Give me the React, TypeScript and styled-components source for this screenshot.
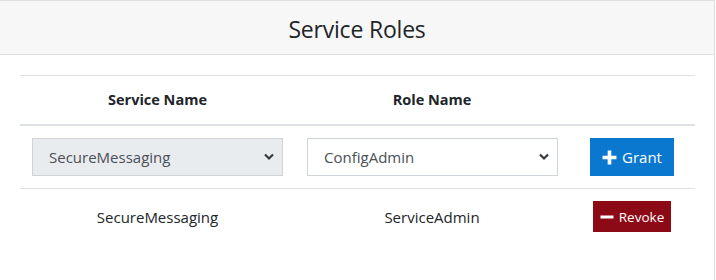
import styled, { createGlobalStyle } from 'styled-components';

const GlobalStyle = createGlobalStyle`
    html, body {
        margin: 0;
        padding: 0;
        background: #ffffff;
    }
    body {
        font-family: "Open Sans", "Noto Sans", sans-serif;
        font-size: 15px;
        color: #212529;
        overflow: hidden;
    }
`

const Card = styled.div`
    width: 715px;
    height: 280px;
    box-sizing: border-box;
    border-top: 1px solid #dfdfdf;
    border-right: 1px solid #dfdfdf;
    background: #ffffff;
`

const CardHeader = styled.div`
    height: 53px;
    display: flex;
    align-items: center;
    justify-content: center;
    background: #f7f7f7;
    border-bottom: 1px solid #dfdfdf;
`

const Title = styled.h3`
    margin: 0;
    font-size: 23px;
    font-weight: 400;
    color: #212529;
    letter-spacing: -0.2px;
    padding-top: 2px;
`

const CardBody = styled.div`
    padding: 20px 20px 0 20px;
`

const Table = styled.table`
    width: 675px;
    border-collapse: collapse;
    table-layout: fixed;
`

const HeadCell = styled.th`
    padding: 12px;
    line-height: 24px;
    font-weight: 700;
    font-size: 14.5px;
    text-align: center;
    border-top: 1px solid #dee2e6;
    border-bottom: 2px solid #dee2e6;
`

const Cell = styled.td<{ $border?: boolean }>`
    padding: 12px;
    line-height: 24px;
    text-align: center;
    vertical-align: middle;
    border-top: ${p => (p.$border ? '1px solid #dee2e6' : 'none')};
`

const SelectWrap = styled.div`
    position: relative;
    width: 251px;
    height: 38px;
`

const Select = styled.select<{ $disabled?: boolean }>`
    appearance: none;
    -webkit-appearance: none;
    width: 100%;
    height: 38px;
    box-sizing: border-box;
    padding: 0 30px 0 16px;
    border: 1px solid #ced4da;
    border-radius: 0;
    background: ${p => (p.$disabled ? '#e9ecef' : '#ffffff')};
    color: #495057;
    font-family: "Open Sans", "Noto Sans", sans-serif;
    font-size: 15px;
    opacity: 1;
`

const Chevron = styled.svg`
    position: absolute;
    right: 9px;
    top: 15px;
    pointer-events: none;
`

const Button = styled.button<{ $tone: 'grant' | 'revoke' }>`
    display: inline-flex;
    align-items: center;
    justify-content: center;
    gap: 5px;
    border: none;
    border-radius: 0;
    color: #ffffff;
    font-family: "Open Sans", "Noto Sans", sans-serif;
    background: ${p => (p.$tone === 'grant' ? '#0b78d0' : '#8c0a16')};
    width: ${p => (p.$tone === 'grant' ? '84px' : '78px')};
    height: ${p => (p.$tone === 'grant' ? '38px' : '31px')};
    font-size: ${p => (p.$tone === 'grant' ? '15px' : '13.5px')};
    padding: 0;
    vertical-align: middle;
`

function ChevronIcon() {
    return (
        <Chevron width="10" height="8" viewBox="0 0 10 8">
            <path d="M1 1.5 L5 5.5 L9 1.5" fill="none" stroke="#343a40" strokeWidth="2.2" />
        </Chevron>
    )
}

function PlusIcon() {
    return (
        <svg width="15" height="15" viewBox="0 0 14 14">
            <path d="M5.3 0.5h3.4v4.8h4.8v3.4H8.7v4.8H5.3V8.7H0.5V5.3h4.8z" fill="#ffffff" />
        </svg>
    )
}

function MinusIcon() {
    return (
        <svg width="14" height="12" viewBox="0 0 14 12">
            <rect x="0.5" y="4.5" width="13" height="3" fill="#ffffff" />
        </svg>
    )
}

function App() {
    return (
        <>
            <GlobalStyle />
            <Card>
                <CardHeader>
                    <Title>Service Roles</Title>
                </CardHeader>
                <CardBody>
                    <Table>
                        <colgroup>
                            <col style={{ width: 275 }} />
                            <col style={{ width: 274 }} />
                            <col style={{ width: 126 }} />
                        </colgroup>
                        <thead>
                            <tr>
                                <HeadCell>Service Name</HeadCell>
                                <HeadCell>Role Name</HeadCell>
                                <HeadCell></HeadCell>
                            </tr>
                        </thead>
                        <tbody>
                            <tr>
                                <Cell>
                                    <SelectWrap>
                                        <Select $disabled disabled defaultValue="SecureMessaging">
                                            <option>SecureMessaging</option>
                                        </Select>
                                        <ChevronIcon />
                                    </SelectWrap>
                                </Cell>
                                <Cell>
                                    <SelectWrap>
                                        <Select defaultValue="ConfigAdmin">
                                            <option>ConfigAdmin</option>
                                            <option>ServiceAdmin</option>
                                        </Select>
                                        <ChevronIcon />
                                    </SelectWrap>
                                </Cell>
                                <Cell>
                                    <Button $tone="grant">
                                        <PlusIcon />
                                        Grant
                                    </Button>
                                </Cell>
                            </tr>
                            <tr>
                                <Cell $border>SecureMessaging</Cell>
                                <Cell $border>ServiceAdmin</Cell>
                                <Cell $border>
                                    <Button $tone="revoke">
                                        <MinusIcon />
                                        Revoke
                                    </Button>
                                </Cell>
                            </tr>
                        </tbody>
                    </Table>
                </CardBody>
            </Card>
        </>
    )
}

export default App
